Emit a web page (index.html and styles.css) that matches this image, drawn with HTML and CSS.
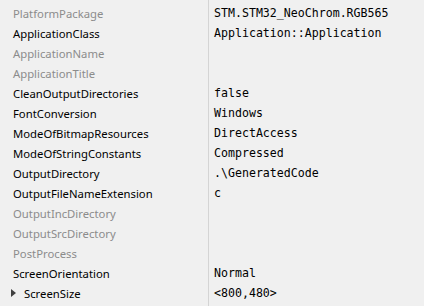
FILE: index.html
```html
<!DOCTYPE html>
<html>
<head>
<meta charset="utf-8">
<link rel="stylesheet" href="styles.css">
</head>
<body>
<div class="grid">
  <div class="row"><div class="name dim">PlatformPackage</div><div class="value">STM.STM32_NeoChrom.RGB565</div></div>
  <div class="row"><div class="name">ApplicationClass</div><div class="value">Application::Application</div></div>
  <div class="row"><div class="name dim">ApplicationName</div><div class="value"></div></div>
  <div class="row"><div class="name dim">ApplicationTitle</div><div class="value"></div></div>
  <div class="row"><div class="name">CleanOutputDirectories</div><div class="value">false</div></div>
  <div class="row"><div class="name">FontConversion</div><div class="value">Windows</div></div>
  <div class="row"><div class="name">ModeOfBitmapResources</div><div class="value">DirectAccess</div></div>
  <div class="row"><div class="name">ModeOfStringConstants</div><div class="value">Compressed</div></div>
  <div class="row"><div class="name">OutputDirectory</div><div class="value">.\GeneratedCode</div></div>
  <div class="row"><div class="name">OutputFileNameExtension</div><div class="value">c</div></div>
  <div class="row"><div class="name dim">OutputIncDirectory</div><div class="value"></div></div>
  <div class="row"><div class="name dim">OutputSrcDirectory</div><div class="value"></div></div>
  <div class="row"><div class="name dim">PostProcess</div><div class="value"></div></div>
  <div class="row"><div class="name">ScreenOrientation</div><div class="value">Normal</div></div>
  <div class="row"><div class="name expandable"><span class="arrow"></span>ScreenSize</div><div class="value">&lt;800,480&gt;</div></div>
</div>
</body>
</html>
```
FILE: styles.css
```css
html, body {
  margin: 0;
  padding: 0;
  background: #f0f0f0;
  height: 100%;
  overflow: hidden;
}
.grid {
  padding-top: 3px;
  display: flex;
  flex-direction: column;
  position: relative;
  min-height: 306px;
  box-sizing: border-box;
}
.grid::before {
  content: "";
  position: absolute;
  left: 208px;
  top: 0;
  bottom: 0;
  width: 1px;
  background: #d4d4d4;
}
.row {
  display: grid;
  grid-template-columns: 208px 1fr;
  height: 20px;
  align-items: center;
}
.name {
  padding-left: 13px;
  font-family: "Noto Sans", sans-serif;
  font-size: 11.3px;
  color: #000;
  white-space: nowrap;
  display: flex;
  align-items: center;
}
.name.dim {
  color: #8c8c8c;
}
.expandable {
  padding-left: 11px;
}
.arrow {
  width: 0;
  height: 0;
  border-top: 4.5px solid transparent;
  border-bottom: 4.5px solid transparent;
  border-left: 5px solid #404040;
  margin-right: 8px;
}
.value {
  padding-left: 6px;
  font-family: "DejaVu Sans Mono", monospace;
  font-size: 11.6px;
  color: #000;
  white-space: nowrap;
}
```
